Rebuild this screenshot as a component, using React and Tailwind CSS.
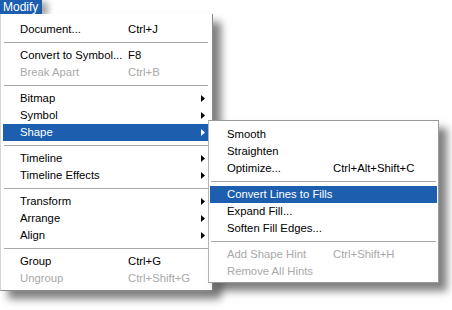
import React from "react";

const mainItems = [
  { label: "Document...", sc: "Ctrl+J" },
  { sep: true },
  { label: "Convert to Symbol...", sc: "F8" },
  { label: "Break Apart", sc: "Ctrl+B", disabled: true },
  { sep: true },
  { label: "Bitmap", arrow: true },
  { label: "Symbol", arrow: true },
  { label: "Shape", arrow: true, active: true },
  { sep: true },
  { label: "Timeline", arrow: true },
  { label: "Timeline Effects", arrow: true },
  { sep: true },
  { label: "Transform", arrow: true },
  { label: "Arrange", arrow: true },
  { label: "Align", arrow: true },
  { sep: true },
  { label: "Group", sc: "Ctrl+G" },
  { label: "Ungroup", sc: "Ctrl+Shift+G", disabled: true },
];

const subItems = [
  { label: "Smooth" },
  { label: "Straighten" },
  { label: "Optimize...", sc: "Ctrl+Alt+Shift+C" },
  { sep: true },
  { label: "Convert Lines to Fills", active: true },
  { label: "Expand Fill..." },
  { label: "Soften Fill Edges..." },
  { sep: true },
  { label: "Add Shape Hint", sc: "Ctrl+Shift+H", disabled: true },
  { label: "Remove All Hints", disabled: true },
];

function Arrow({ white }) {
  return (
    <svg width="4" height="7" viewBox="0 0 4 7" className="shrink-0">
      <path d="M0 0 L4 3.5 L0 7 Z" fill={white ? "#ffffff" : "#000000"} />
    </svg>
  );
}

function Row({ item, labelW }) {
  if (item.sep) {
    return (
      <div className="h-[9px] flex items-center px-[1px]">
        <div className="h-px w-full bg-[#a9a9a9]" />
      </div>
    );
  }
  const color = item.active
    ? "bg-[#1d5fae] text-white"
    : item.disabled
    ? "text-[#a9a9a9]"
    : "text-black";
  return (
    <div className={`h-[17px] flex items-center pl-[17px] pr-[4px] ${color}`}>
      <div className={`${labelW} shrink-0 whitespace-nowrap`}>{item.label}</div>
      <div className="flex-1 whitespace-nowrap">{item.sc || ""}</div>
      {item.arrow && <Arrow white={item.active} />}
    </div>
  );
}

export default function App() {
  return (
    <div
      className="relative w-[452px] h-[310px] bg-white overflow-hidden text-[11.3px] leading-none"
      style={{ fontFamily: '"Liberation Sans", Arial, sans-serif' }}
    >
      <div className="relative z-10 h-[14px] w-[42px] bg-[#1d5fae] text-white flex items-center pl-[3px] text-[12px] shadow-[6px_2px_6px_rgba(0,0,0,0.35)]">
        Modify
      </div>
      <div className="relative z-20 w-[213px] bg-white border border-t-0 border-l-[#d4d4d4] border-r-[#8a8a8a] border-b-[#8a8a8a] pt-[7px] pb-[3px] pl-[2px] pr-[3px] shadow-[8px_8px_8px_rgba(0,0,0,0.5)]">
        {mainItems.map((it, i) => (
          <Row key={i} item={it} labelW="w-[108px]" />
        ))}
      </div>
      <div className="absolute z-30 left-[208px] top-[120px] w-[231px] bg-white border border-[#9a9a9a] border-l-[#b5b5b5] pt-[5px] pb-[2px] px-[1px] shadow-[8px_8px_8px_rgba(0,0,0,0.5)]">
        {subItems.map((it, i) => (
          <Row key={i} item={it} labelW="w-[106px]" />
        ))}
      </div>
    </div>
  );
}
